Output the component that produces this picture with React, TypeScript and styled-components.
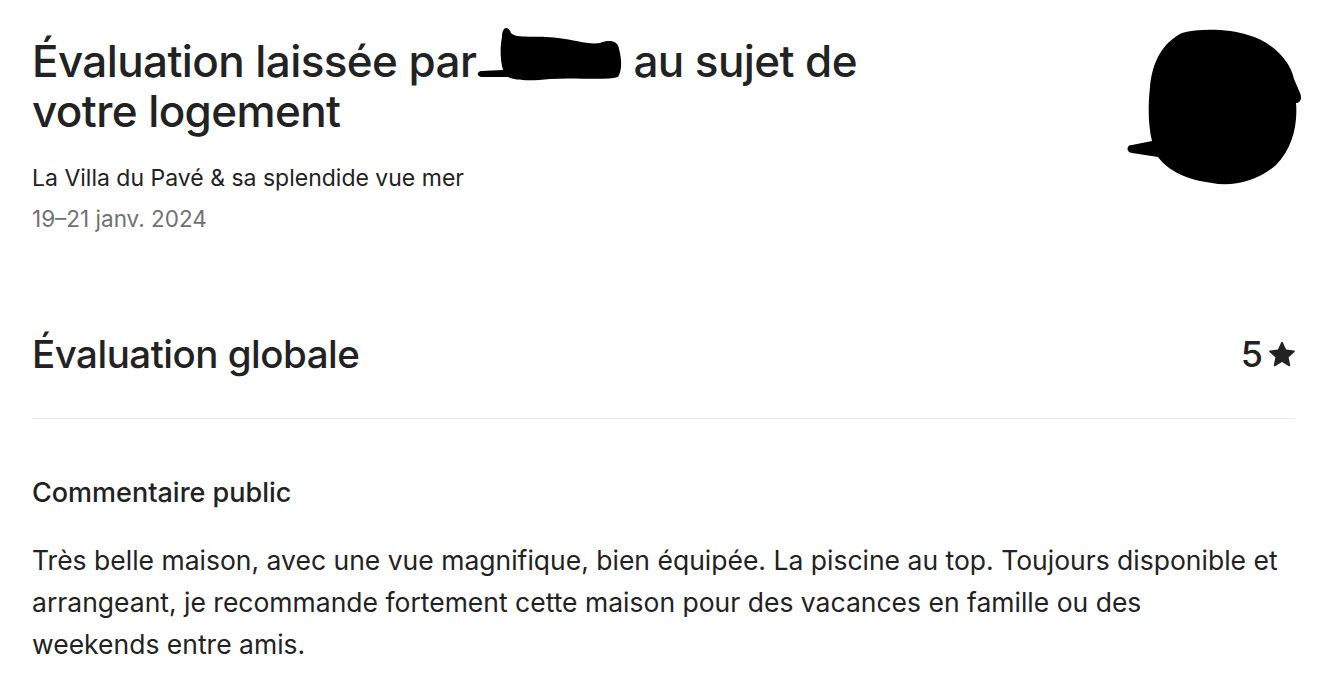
import React from "react";
import styled, { createGlobalStyle } from "styled-components";

const GlobalStyle = createGlobalStyle`
  html, body {
    margin: 0;
    padding: 0;
    background: #ffffff;
  }
  body {
    font-family: Inter, "Noto Sans", "Liberation Sans", sans-serif;
    color: #222222;
    -webkit-font-smoothing: antialiased;
  }
`;

const Page = styled.main`
  padding: 36px 38px 0 32px;
`;

const Header = styled.header`
  display: flex;
  justify-content: space-between;
  align-items: flex-start;
`;

const HeaderText = styled.div`
  display: flex;
  flex-direction: column;
`;

const Title = styled.h1`
  margin: 0;
  font-size: 44px;
  line-height: 50px;
  font-weight: 500;
  letter-spacing: -0.6px;
  color: #222222;
  max-width: 860px;
`;

const Redacted = styled.span`
  display: inline-block;
  width: 146px;
  height: 40px;
  position: relative;
  vertical-align: baseline;
`;

const RedactedMark = styled.svg`
  position: absolute;
  left: 0;
  top: -12px;
`;

const Listing = styled.div`
  margin-top: 27px;
  font-size: 23px;
  line-height: 30px;
  color: #222222;
`;

const Dates = styled.div`
  margin-top: 11px;
  font-size: 22.5px;
  line-height: 30px;
  color: #717171;
`;

const Avatar = styled.svg`
  flex: none;
  margin-top: -11px;
  margin-right: -11px;
`;

const RatingRow = styled.section`
  display: flex;
  justify-content: space-between;
  align-items: center;
  margin-top: 96px;
  padding-bottom: 40px;
  border-bottom: 1px solid #ebebeb;
`;

const RatingTitle = styled.h2`
  margin: 0;
  font-size: 38.5px;
  line-height: 48px;
  font-weight: 500;
  letter-spacing: -0.5px;
  color: #222222;
`;

const Score = styled.div`
  display: flex;
  align-items: center;
  gap: 6px;
  font-size: 36px;
  line-height: 48px;
  font-weight: 500;
  color: #222222;
`;

const CommentLabel = styled.h3`
  margin: 58px 0 0;
  font-size: 27px;
  line-height: 32px;
  font-weight: 500;
  color: #222222;
`;

const CommentBody = styled.p`
  margin: 30px 0 0;
  font-size: 26.5px;
  line-height: 42px;
  font-weight: 400;
  color: #222222;
`;

const Star = () => (
  <svg width="26" height="26" viewBox="0 0 32 32" aria-hidden="true">
    <path
      fill="#222222"
      d="M15.1 1.58l-4.13 8.88-9.86 1.27a1 1 0 0 0-.54 1.74l7.3 6.57-1.97 9.85a1 1 0 0 0 1.48 1.06l8.62-5 8.63 5a1 1 0 0 0 1.48-1.06l-1.97-9.85 7.3-6.57a1 1 0 0 0-.55-1.73l-9.86-1.28-4.12-8.88a1 1 0 0 0-1.82 0z"
    />
  </svg>
);

export default function App() {
  return (
    <>
      <GlobalStyle />
      <Page>
        <Header>
          <HeaderText>
            <Title>
              Évaluation laissée par
              <Redacted>
                <RedactedMark width="150" height="58" viewBox="0 0 150 58" aria-hidden="true">
                  <path
                    fill="#000"
                    d="M26 12 C26 2 32 0 35 8 C40 14 60 10 82 13 C100 15 112 20 124 18 C134 14 142 16 143 24 C146 34 146 46 142 52 C128 56 100 52 74 54 C56 56 40 56 32 52 L6 52 C1 52 0 47 5 46 L27 45 C24 34 24 22 26 12 Z"
                  />
                </RedactedMark>
              </Redacted>{" "}
              au sujet de votre logement
            </Title>
            <Listing>La Villa du Pavé &amp; sa splendide vue mer</Listing>
            <Dates>19–21 janv. 2024</Dates>
          </HeaderText>
          <Avatar width="186" height="164" viewBox="0 0 186 164" aria-hidden="true">
            <path
              fill="#000"
              d="M62 8 C80 3 110 4 128 10 C150 16 170 34 174 54 L180 68 C182 72 181 78 176 78 C178 100 172 124 156 140 C138 156 112 162 92 158 C68 155 48 146 38 132 L12 128 C6 127 6 120 12 120 L32 116 C28 100 28 80 30 62 C32 38 42 18 62 8 Z"
            />
          </Avatar>
        </Header>

        <RatingRow>
          <RatingTitle>Évaluation globale</RatingTitle>
          <Score>
            <span>5</span>
            <Star />
          </Score>
        </RatingRow>

        <CommentLabel>Commentaire public</CommentLabel>
        <CommentBody>
          Très belle maison, avec une vue magnifique, bien équipée. La piscine au top. Toujours
          disponible et arrangeant, je recommande fortement cette maison pour des vacances en
          famille ou des
          <br />
          weekends entre amis.
        </CommentBody>
      </Page>
    </>
  );
}
